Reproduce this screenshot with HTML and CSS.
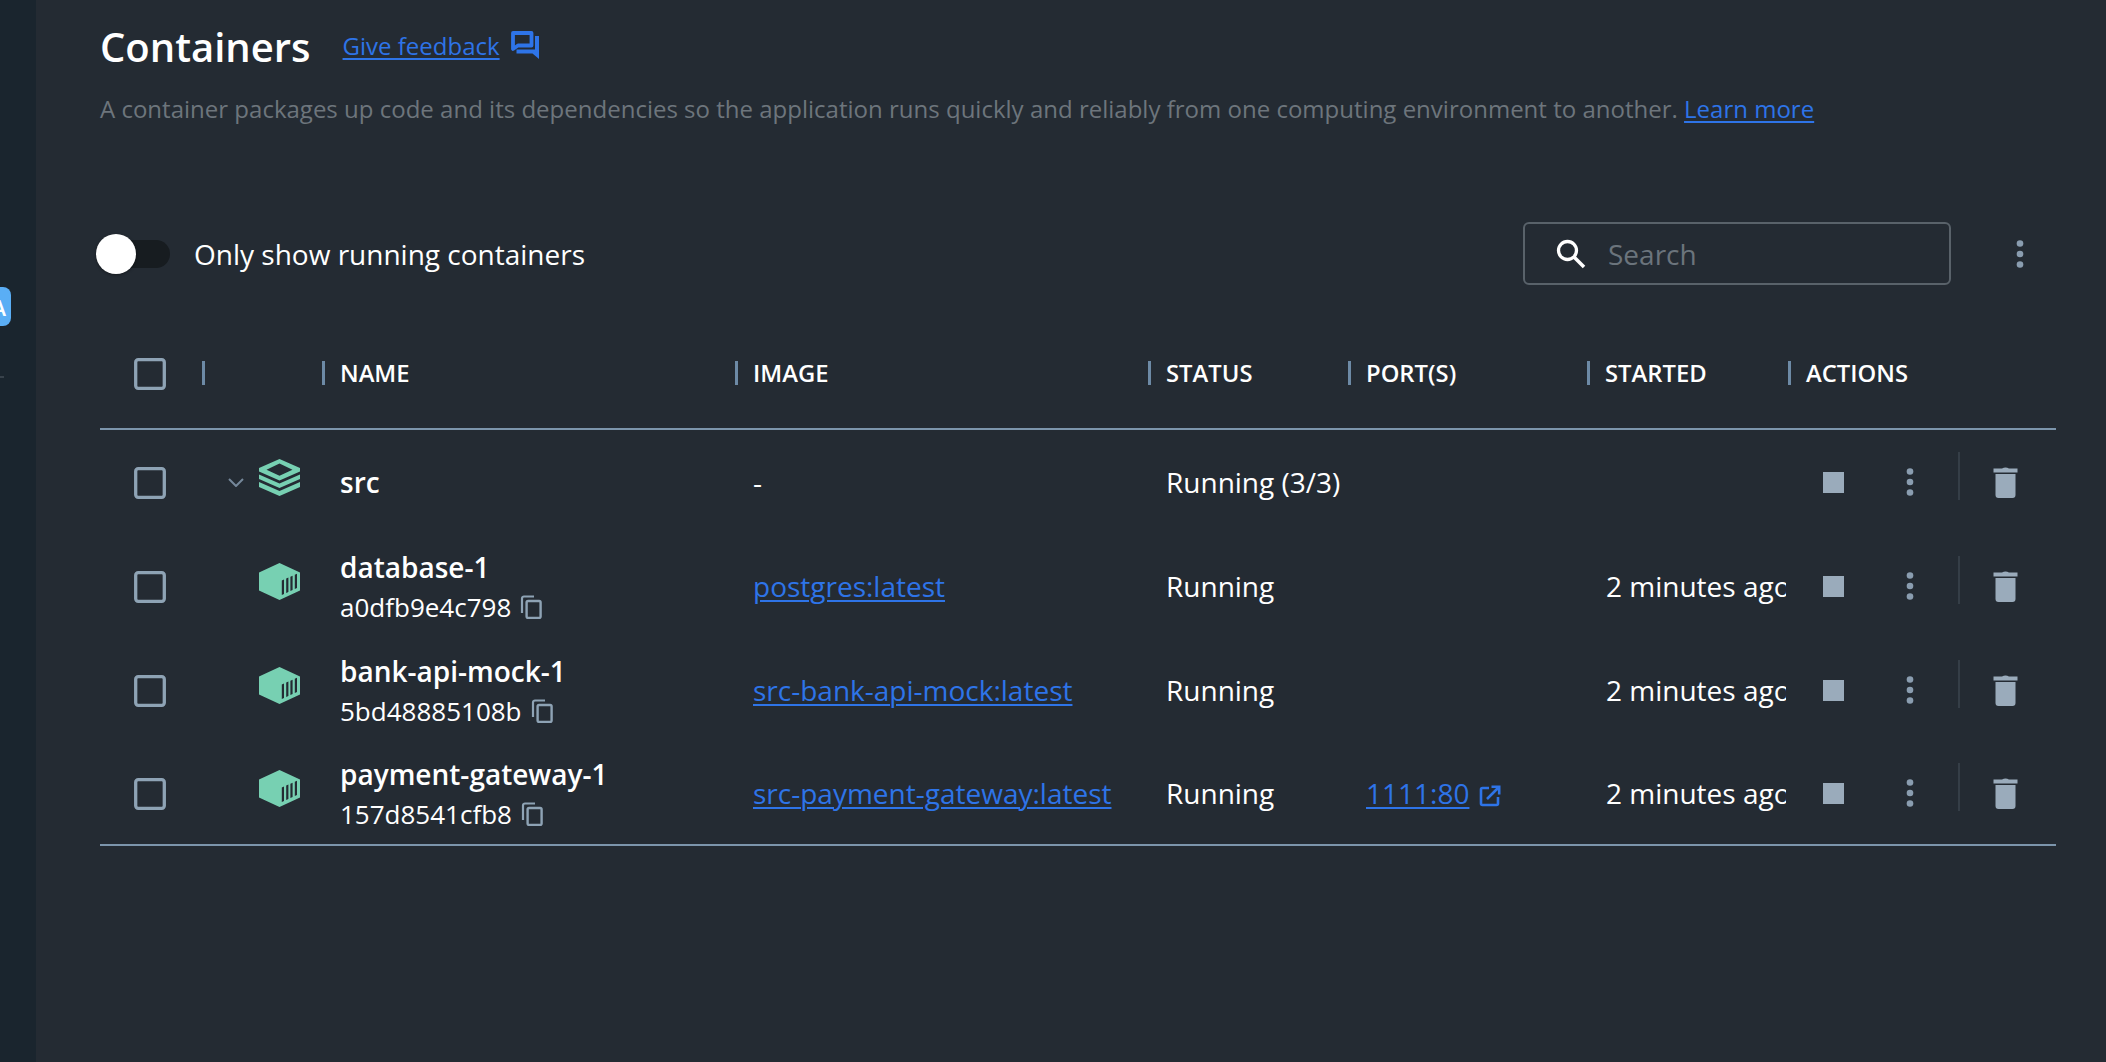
FILE: index.html
```html
<!DOCTYPE html>
<html lang="en">
<head>
    <meta charset="UTF-8">
    <title>Containers</title>
    <link rel="stylesheet" href="styles.css">
</head>
<body>
    <svg class="defs" width="0" height="0">
        <symbol id="i-check" viewBox="0 0 32 32"><rect x="1.700" y="1.700" width="28.600" height="28.600" rx="2.500" fill="none" stroke="currentColor" stroke-width="3.300"/></symbol>
        <symbol id="i-box" viewBox="0 0 41 37"><path fill-rule="evenodd" d="M20.500 0 41 9.500V27.500L20.500 37 0 27.500V9.500ZM22.800 17.500V32l2.200-1V16.500ZM27.200 15.600V30l2.200-1V14.600ZM31.400 13.700V28l2.200-1V12.700ZM35.800 11.800V26l2.200-1V10.800Z"/></symbol>
        <symbol id="i-copy" viewBox="0 0 22 24"><path fill="none" stroke="currentColor" stroke-width="2.200" d="M2 18V3.500A2 2 0 0 1 4 1.500H14"/><rect x="6.600" y="6" width="14" height="17" rx="1.500" fill="none" stroke="currentColor" stroke-width="2.400"/></symbol>
        <symbol id="i-stop" viewBox="0 0 21 21"><rect width="21" height="21"/></symbol>
        <symbol id="i-more" viewBox="0 0 8 28"><circle cx="4" cy="3.500" r="3.300"/><circle cx="4" cy="14" r="3.300"/><circle cx="4" cy="24.500" r="3.300"/></symbol>
        <symbol id="i-trash" viewBox="0 0 25 31"><path d="M9 1.500Q12.500 -.5 16 1.500H24.500V5.500H.5V1.500ZM2.500 7H22.500V28A3 3 0 0 1 19.500 31H5.500A3 3 0 0 1 2.500 28Z"/></symbol>
    </svg>
    <div class="app">
        <aside class="sidebar">
            <div class="badge">A</div>
            <div class="side-tick"></div>
        </aside>
        <main class="main">
            <header class="title-row">
                <h1>Containers</h1>
                <a class="link feedback" href="#">Give feedback</a>
                <svg class="feedback-icon" viewBox="0 0 28 28"><path fill="none" stroke="currentColor" stroke-width="3.800" stroke-linejoin="round" d="M2 2H20.500V14.500H7L2 18Z"/><path d="M24 5H28V28L21.500 22.500H5.500V18.500H24Z" fill="currentColor"/></svg>
            </header>
            <p class="intro">A container packages up code and its dependencies so the application runs quickly and reliably from one computing environment to another. <a class="link" href="#">Learn more</a></p>

            <div class="toolbar">
                <div class="switch"><span class="knob"></span></div>
                <span class="switch-label">Only show running containers</span>
                <div class="search">
                    <svg class="search-icon" viewBox="0 0 32 32"><circle cx="12.500" cy="12.500" r="9" fill="none" stroke="currentColor" stroke-width="3.300"/><path d="M19 19 29 29" stroke="currentColor" stroke-width="3.600" fill="none"/></svg>
                    <span class="placeholder">Search</span>
                </div>
                <svg class="toolbar-more"><use href="#i-more"/></svg>
            </div>

            <div class="table">
                <div class="row head">
                    <div class="cell"><svg class="check"><use href="#i-check"/></svg></div>
                    <div class="cell th"></div>
                    <div class="cell th">Name</div>
                    <div class="cell th">Image</div>
                    <div class="cell th">Status</div>
                    <div class="cell th">Port(s)</div>
                    <div class="cell th">Started</div>
                    <div class="cell th">Actions</div>
                </div>

                <div class="row">
                    <div class="cell"><svg class="check"><use href="#i-check"/></svg></div>
                    <div class="cell icons">
                        <svg class="chevron" viewBox="0 0 16 9"><path d="M1 1 8 8 15 1" fill="none" stroke="currentColor" stroke-width="2"/></svg>
                        <svg class="kind stack" viewBox="0 0 41 37"><path fill-rule="evenodd" d="M20.500 0 41 9V12.500L20.500 21.500 0 12.500V9ZM20.500 4.500 7.500 10.700 20.500 16.800 33.500 10.700Z"/><path d="M0 15.500 20.500 24.500 41 15.500V20L20.500 29 0 20Z"/><path d="M0 23 20.500 32 41 23V28L20.500 37 0 28Z"/></svg>
                    </div>
                    <div class="cell name">src</div>
                    <div class="cell">-</div>
                    <div class="cell">Running (3/3)</div>
                    <div class="cell"></div>
                    <div class="cell"></div>
                    <div class="cell actions">
                        <svg class="stop"><use href="#i-stop"/></svg>
                        <svg class="more"><use href="#i-more"/></svg>
                        <span class="divider"></span>
                        <svg class="trash"><use href="#i-trash"/></svg>
                    </div>
                </div>

                <div class="row">
                    <div class="cell"><svg class="check"><use href="#i-check"/></svg></div>
                    <div class="cell icons"><svg class="kind"><use href="#i-box"/></svg></div>
                    <div class="cell stacked">
                        <div class="name">database-1</div>
                        <div class="cid">a0dfb9e4c798 <svg class="copy"><use href="#i-copy"/></svg></div>
                    </div>
                    <div class="cell"><a class="link" href="#">postgres:latest</a></div>
                    <div class="cell">Running</div>
                    <div class="cell"></div>
                    <div class="cell clip">2 minutes ago</div>
                    <div class="cell actions">
                        <svg class="stop"><use href="#i-stop"/></svg>
                        <svg class="more"><use href="#i-more"/></svg>
                        <span class="divider"></span>
                        <svg class="trash"><use href="#i-trash"/></svg>
                    </div>
                </div>

                <div class="row">
                    <div class="cell"><svg class="check"><use href="#i-check"/></svg></div>
                    <div class="cell icons"><svg class="kind"><use href="#i-box"/></svg></div>
                    <div class="cell stacked">
                        <div class="name">bank-api-mock-1</div>
                        <div class="cid">5bd48885108b <svg class="copy"><use href="#i-copy"/></svg></div>
                    </div>
                    <div class="cell"><a class="link" href="#">src-bank-api-mock:latest</a></div>
                    <div class="cell">Running</div>
                    <div class="cell"></div>
                    <div class="cell clip">2 minutes ago</div>
                    <div class="cell actions">
                        <svg class="stop"><use href="#i-stop"/></svg>
                        <svg class="more"><use href="#i-more"/></svg>
                        <span class="divider"></span>
                        <svg class="trash"><use href="#i-trash"/></svg>
                    </div>
                </div>

                <div class="row last">
                    <div class="cell"><svg class="check"><use href="#i-check"/></svg></div>
                    <div class="cell icons"><svg class="kind"><use href="#i-box"/></svg></div>
                    <div class="cell stacked">
                        <div class="name">payment-gateway-1</div>
                        <div class="cid">157d8541cfb8 <svg class="copy"><use href="#i-copy"/></svg></div>
                    </div>
                    <div class="cell"><a class="link" href="#">src-payment-gateway:latest</a></div>
                    <div class="cell">Running</div>
                    <div class="cell port">
                        <a class="link" href="#">1111:80</a>
                        <svg class="open" viewBox="0 0 22 22"><path fill="none" stroke="currentColor" stroke-width="2.600" d="M10 3H3.500Q2 3 2 4.500V18.500Q2 20 3.500 20H17.500Q19 20 19 18.500V12"/><path fill="none" stroke="currentColor" stroke-width="2.600" d="M8 14 19.500 2.500M12.500 1.800H20.200V9.500"/></svg>
                    </div>
                    <div class="cell clip">2 minutes ago</div>
                    <div class="cell actions">
                        <svg class="stop"><use href="#i-stop"/></svg>
                        <svg class="more"><use href="#i-more"/></svg>
                        <span class="divider"></span>
                        <svg class="trash"><use href="#i-trash"/></svg>
                    </div>
                </div>
            </div>
        </main>
    </div>
</body>
</html>
```

FILE: styles.css
```css
* {
    box-sizing: border-box;
}
html, body {
    margin: 0;
    height: 100%;
    overflow: hidden;
}
body {
    font-family: "Open Sans", sans-serif;
    font-size: 28px;
    color: #fff;
    background: #242b33;
}
.defs {
    display: block;
}
.app {
    display: flex;
    height: 1062px;
}
.sidebar {
    width: 36px;
    flex: none;
    background: #1a252e;
    padding-top: 287px;
}
.badge {
    width: 40px;
    height: 39px;
    margin-left: -29px;
    padding-right: 5px;
    display: flex;
    align-items: center;
    justify-content: flex-end;
    background: #5aaef5;
    border-radius: 8px;
    font-size: 22px;
    font-weight: 600;
    line-height: 1;
}
.side-tick {
    width: 4px;
    height: 2px;
    margin-top: 50px;
    background: #38424b;
}
.main {
    flex: 1;
    padding: 0 50px 0 64px;
}
.link {
    color: #2e74e8;
    text-decoration: underline;
    text-underline-offset: 3px;
    text-decoration-thickness: 2px;
}
.title-row {
    display: flex;
    align-items: center;
    height: 93px;
}
h1 {
    margin: 0;
    font-size: 40px;
    font-weight: 600;
    line-height: 1;
}
.feedback {
    margin-left: 32px;
    margin-bottom: 3px;
    font-size: 24px;
}
.feedback-icon {
    width: 28px;
    height: 28px;
    margin-left: 11px;
    margin-bottom: 4px;
    color: #2e74e8;
}
.intro {
    margin: 0;
    height: 40px;
    line-height: 32px;
    font-size: 24.030px;
    color: #6d757c;
}
.toolbar {
    display: flex;
    align-items: center;
    height: 63px;
    margin-top: 89px;
}
.switch {
    position: relative;
    width: 74px;
    height: 28px;
    margin-left: -4px;
    border-radius: 14px;
    background: #171c20;
}
.knob {
    position: absolute;
    left: 0;
    top: -6px;
    width: 40px;
    height: 40px;
    border-radius: 50%;
    background: #fff;
    box-shadow: 0 1px 3px rgba(0, 0, 0, 0.4);
}
.switch-label {
    margin-left: 24px;
}
.search {
    display: flex;
    align-items: center;
    width: 428px;
    height: 63px;
    margin-left: auto;
    padding-left: 30px;
    border: 2px solid #59626a;
    border-radius: 6px;
}
.search-icon {
    width: 32px;
    height: 32px;
    color: #fff;
}
.placeholder {
    margin-left: 21px;
    color: #6b747c;
}
.toolbar-more {
    width: 8px;
    height: 28px;
    margin-left: 65px;
    margin-right: 32px;
    fill: #8a9db0;
}
.row {
    display: grid;
    grid-template-columns: 102px 120px 413px 413px 200px 239px 201px 268px;
    height: 104px;
}
.head {
    height: 110px;
    margin-top: 35px;
    padding-bottom: 2px;
    border-bottom: 2px solid #7c95ac;
}
.last {
    border-bottom: 2px solid #7c95ac;
}
.cell {
    display: flex;
    align-items: center;
    min-width: 0;
    padding-left: 18px;
}
.cell:first-child {
    padding-left: 34px;
}
.th {
    padding-left: 0;
    font-size: 23.800px;
    font-weight: 600;
    text-transform: uppercase;
}
.th::before {
    content: "";
    width: 3px;
    height: 24px;
    margin-right: 15px;
    background: #6d8aa6;
}
.check {
    width: 32px;
    height: 32px;
    margin-top: 1px;
    color: #8ea3b5;
}
.icons {
    padding-left: 26px;
}
.chevron {
    width: 16px;
    height: 9px;
    color: #75879a;
}
.kind {
    width: 41px;
    height: 37px;
    margin-left: 31px;
    margin-bottom: 9px;
    fill: #77d0b2;
}
.stack {
    margin-left: 15px;
    margin-bottom: 10px;
}
.name {
    font-weight: 600;
}
.stacked {
    flex-direction: column;
    align-items: flex-start;
    justify-content: center;
    padding-top: 2px;
}
.stacked .name {
    line-height: 39px;
}
.cid {
    display: flex;
    align-items: center;
    gap: 9px;
    font-size: 26px;
    line-height: 40px;
}
.copy {
    width: 22px;
    height: 24px;
    color: #8ea3b5;
}
.clip {
    display: block;
    align-self: center;
    margin-right: 2px;
    overflow: hidden;
    white-space: nowrap;
    padding-left: 19px;
}
.port {
    gap: 10px;
}
.open {
    width: 22px;
    height: 22px;
    margin-top: 6px;
    color: #2e74e8;
}
.actions {
    padding-left: 35px;
}
.stop {
    width: 21px;
    height: 21px;
    fill: #9aabbb;
}
.more {
    width: 8px;
    height: 28px;
    margin-left: 62px;
    fill: #8a9db0;
}
.divider {
    width: 2px;
    height: 48px;
    margin-left: 44px;
    margin-bottom: 12px;
    background: #353e47;
}
.trash {
    width: 25px;
    height: 31px;
    margin-left: 33px;
    fill: #9aabbb;
}
```
